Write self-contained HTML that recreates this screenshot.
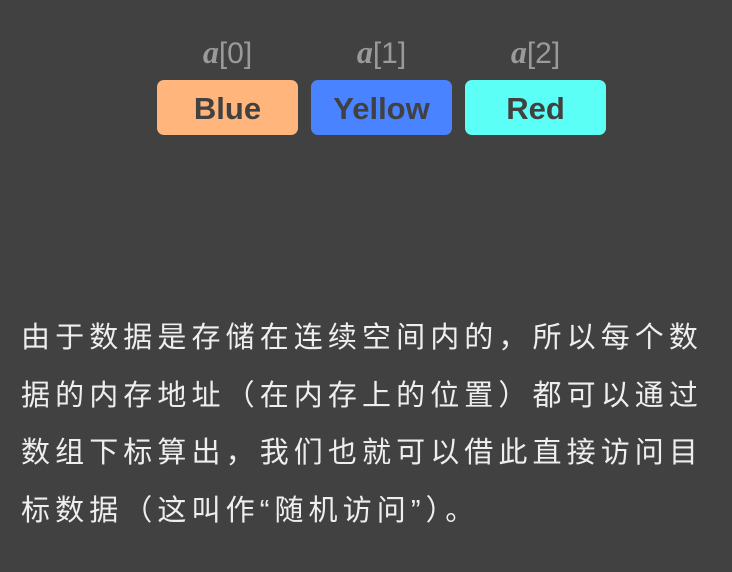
<!DOCTYPE html>
<html><head><meta charset="utf-8"><style>
html,body{margin:0;padding:0;}
body{width:732px;height:572px;background:#414141;position:relative;overflow:hidden;}
.lbl{position:absolute;top:34px;width:141px;text-align:center;color:#9a9a9a;font-family:"Liberation Sans",sans-serif;font-size:30px;}
.lbl i{font-family:"Liberation Serif",serif;font-weight:bold;font-size:32px;}
.box{position:absolute;top:80px;width:141px;height:55px;border-radius:7px;text-align:center;line-height:58px;font-family:"Liberation Sans",sans-serif;font-weight:bold;font-size:31px;color:#414141;}
.t{position:absolute;left:21px;top:310px;width:720px;white-space:nowrap;color:#eeeeee;font-family:"Liberation Sans","Noto Sans CJK SC",sans-serif;font-size:29px;letter-spacing:5.1px;line-height:57.5px;}
</style></head><body>
<div class="lbl" style="left:157px"><i>a</i>[0]</div>
<div class="lbl" style="left:311px"><i>a</i>[1]</div>
<div class="lbl" style="left:465px"><i>a</i>[2]</div>
<div class="box" style="left:157px;background:#ffb57c">Blue</div>
<div class="box" style="left:311px;background:#4a83ff">Yellow</div>
<div class="box" style="left:465px;background:#5bfff6">Red</div>
<div class="t">由于数据是存储在连续空间内的，所以每个数<br>据的内存地址（在内存上的位置）都可以通过<br>数组下标算出，我们也就可以借此直接访问目<br>标数据（这叫作“随机访问”）。</div>
</body></html>
